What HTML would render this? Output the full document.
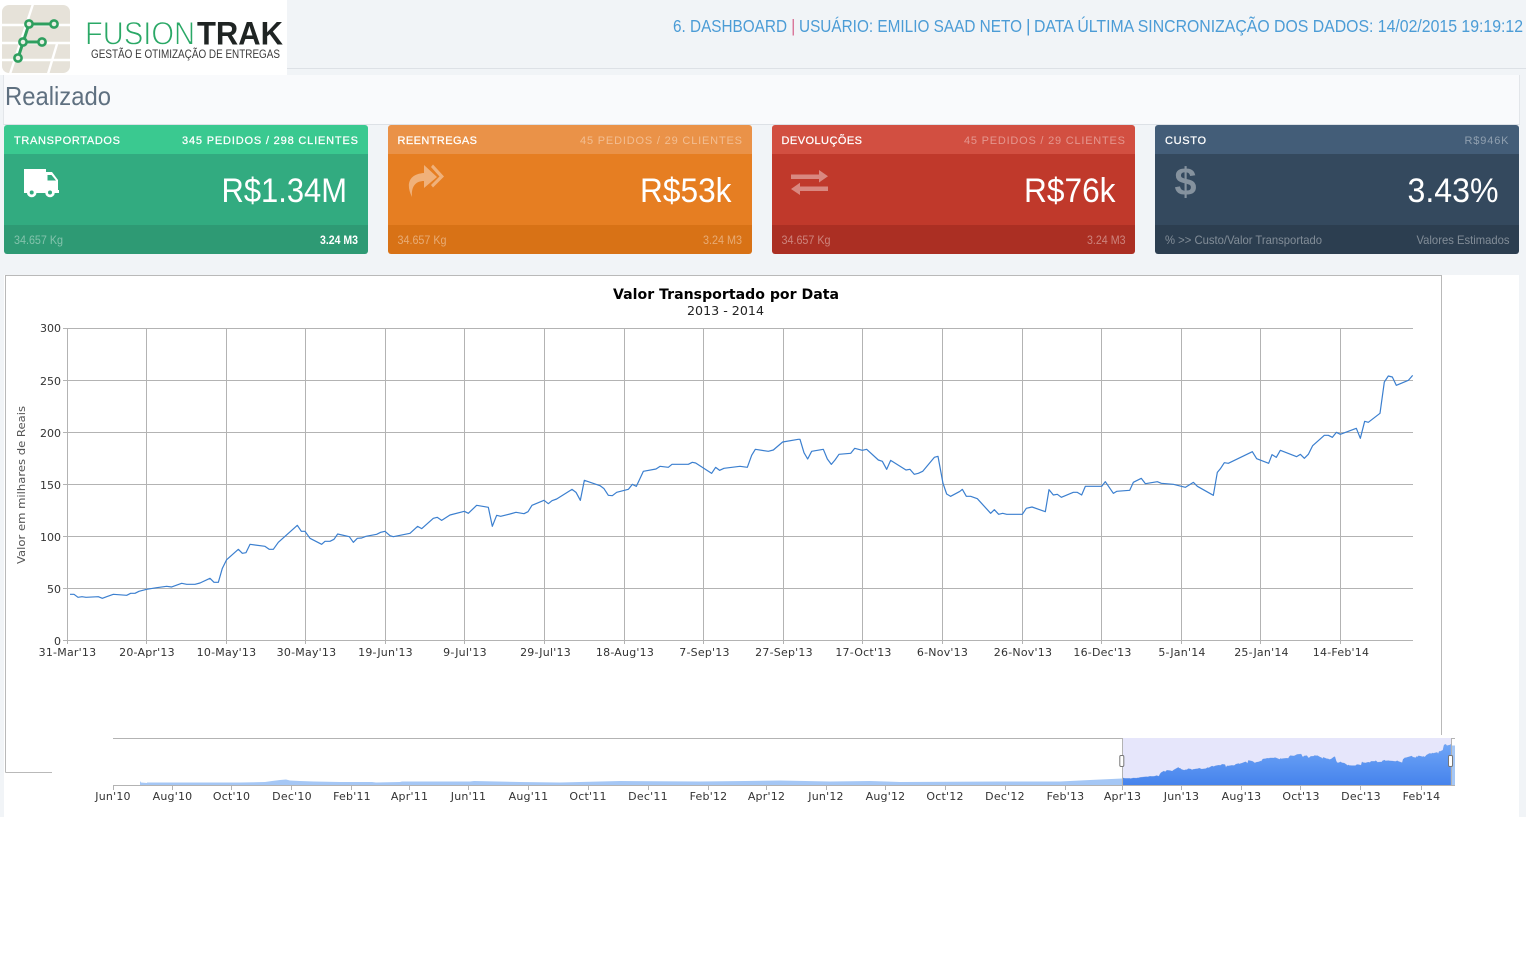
<!DOCTYPE html>
<html lang="pt-BR">
<head>
<meta charset="utf-8">
<title>FusionTrak - Dashboard</title>
<style>
html,body{margin:0;padding:0;width:1526px;height:970px;overflow:hidden;background:#fff}
.abs{position:absolute}
.card{position:absolute;top:125px;height:129px;border-radius:3px;overflow:hidden}
.card i{display:block;position:absolute;left:0;right:0}
.h{top:0;height:29px}.b{top:29px;height:71px}.f{top:100px;height:29px}
svg{position:absolute;left:0;top:0}
text{font-family:"Liberation Sans",sans-serif}
.d text,text.d{font-family:"DejaVu Sans",sans-serif;font-size:11px;fill:#333}
.t text{letter-spacing:.22px}
.w{fill:#fff}
</style>
</head>
<body>
<div class="abs" style="left:0;top:0;width:1526px;height:817px;background:#f1f4f7"></div>
<div class="abs" style="left:0;top:68px;width:1526px;height:1px;background:#dde1e6"></div>
<div class="abs" style="left:0;top:0;width:287px;height:75px;background:#fff"></div>
<div class="abs" style="left:4px;top:75px;width:1515px;height:49px;background:#f9fafc;border-left:1px solid #e3e6ea;border-right:1px solid #e3e6ea;border-bottom:1px solid #dde1e6;box-sizing:content-box;margin-left:-1px"></div>
<div class="abs" style="left:4px;top:275px;width:1515px;height:542px;background:#fff"></div>

<div class="card" style="left:4px;width:364px"><i class="h" style="background:#3ac990"></i><i class="b" style="background:#32ab80"></i><i class="f" style="background:#2e9a74"></i></div>
<div class="card" style="left:388px;width:364px"><i class="h" style="background:#ea9248"></i><i class="b" style="background:#e67e22"></i><i class="f" style="background:#d87216"></i></div>
<div class="card" style="left:772px;width:363px"><i class="h" style="background:#d24f41"></i><i class="b" style="background:#c0392b"></i><i class="f" style="background:#ab2f23"></i></div>
<div class="card" style="left:1155px;width:364px"><i class="h" style="background:#435d78"></i><i class="b" style="background:#34495e"></i><i class="f" style="background:#2c3e50"></i></div>

<svg width="1526" height="970" viewBox="0 0 1526 970" xmlns="http://www.w3.org/2000/svg">
<defs>
<linearGradient id="nav" x1="0" y1="0" x2="0" y2="1"><stop offset="0" stop-color="#6fa5f7"/><stop offset="1" stop-color="#4683ec"/></linearGradient>
<polyline id="l1" transform="translate(60 480) scale(.33333)" points="30,343 42,343 54,352 66,350 78,352 115,350 127,355 140,350 160,343 200,346 212,340 225,340 237,334 260,328 290,323 320,319 335,321 365,310 380,313 405,313 420,309 450,295 462,307 475,307 487,265 500,239 535,208 547,220 558,218 570,193 615,199 628,208 640,208 655,187 712,136 724,154 735,154 750,175 785,193 795,184 810,184 822,178 833,162 868,170 880,187 892,175 905,174 918,169 950,163 962,157 975,154 990,167 1000,170 1050,160 1073,139 1085,146 1120,115 1132,112 1145,121 1170,105 1213,94 1225,100 1250,76 1285,82 1297,139 1310,106 1322,109 1350,102"/>
<polyline id="l2" transform="translate(500 420) scale(.33333)" points="30,282 48,277 72,281 84,275 96,256 132,241 145,251 156,242 170,237 216,208 228,217 241,241 253,181 300,197 312,206 325,226 337,227 350,217 385,208 397,193 409,199 430,154 468,147 480,139 505,142 516,133 565,133 577,127 587,129 635,160 647,142 659,151 672,145 720,139 742,142 755,106 766,88 805,94 820,90 848,66 895,58 900,58 912,98 923,117 935,94 970,88 982,117 994,133 1005,120 1017,103 1052,100 1064,85 1087,91 1100,88 1135,120 1147,124 1160,148 1172,121 1218,150 1230,148 1243,163 1255,160 1268,154 1303,112 1314,109 1329,190 1340,222 1352,229 1380,214"/>
<polyline id="l3" transform="translate(950 360) scale(.33333)" points="30,394 37,388 49,409 62,409 82,416 122,460 133,449 146,463 158,460 170,463 217,463 229,445 246,441 286,455 297,389 310,405 322,403 334,412 370,397 382,397 395,405 406,379 455,379 466,365 490,400 500,394 539,391 550,367 574,355 586,371 622,365 634,370 670,373 706,382 730,367 742,379 790,406 802,337 812,325 823,308 835,310 907,275 920,296 956,310 966,284 979,292 991,271 1040,290 1051,283 1063,295 1075,283 1088,257 1123,226 1135,226 1147,232 1159,217 1171,223 1219,205 1231,235 1244,184 1255,187 1290,160 1303,66 1315,48 1327,51 1339,76 1375,61 1388,46"/>
<clipPath id="navclip">
<polygon transform="translate(1122 785) scale(.24443 .154) translate(-67 -640) translate(60 480) scale(.33333)" points="21,480 21,343 30,343 42,343 54,352 66,350 78,352 115,350 127,355 140,350 160,343 200,346 212,340 225,340 237,334 260,328 290,323 320,319 335,321 365,310 380,313 405,313 420,309 450,295 462,307 475,307 487,265 500,239 535,208 547,220 558,218 570,193 615,199 628,208 640,208 655,187 712,136 724,154 735,154 750,175 785,193 795,184 810,184 822,178 833,162 868,170 880,187 892,175 905,174 918,169 950,163 962,157 975,154 990,167 1000,170 1050,160 1073,139 1085,146 1120,115 1132,112 1145,121 1170,105 1213,94 1225,100 1250,76 1285,82 1297,139 1310,106 1322,109 1350,102 1352,480"/>
<polygon transform="translate(1122 785) scale(.24443 .154) translate(-67 -640) translate(500 420) scale(.33333)" points="30,660 30,282 48,277 72,281 84,275 96,256 132,241 145,251 156,242 170,237 216,208 228,217 241,241 253,181 300,197 312,206 325,226 337,227 350,217 385,208 397,193 409,199 430,154 468,147 480,139 505,142 516,133 565,133 577,127 587,129 635,160 647,142 659,151 672,145 720,139 742,142 755,106 766,88 805,94 820,90 848,66 895,58 900,58 912,98 923,117 935,94 970,88 982,117 994,133 1005,120 1017,103 1052,100 1064,85 1087,91 1100,88 1135,120 1147,124 1160,148 1172,121 1218,150 1230,148 1243,163 1255,160 1268,154 1303,112 1314,109 1329,190 1340,222 1352,229 1380,214 1382,660"/>
<polygon transform="translate(1122 785) scale(.24443 .154) translate(-67 -640) translate(950 360) scale(.33333)" points="30,840 30,394 37,388 49,409 62,409 82,416 122,460 133,449 146,463 158,460 170,463 217,463 229,445 246,441 286,455 297,389 310,405 322,403 334,412 370,397 382,397 395,405 406,379 455,379 466,365 490,400 500,394 539,391 550,367 574,355 586,371 622,365 634,370 670,373 706,382 730,367 742,379 790,406 802,337 812,325 823,308 835,310 907,275 920,296 956,310 966,284 979,292 991,271 1040,290 1051,283 1063,295 1075,283 1088,257 1123,226 1135,226 1147,232 1159,217 1171,223 1219,205 1231,235 1244,184 1255,187 1290,160 1303,66 1315,48 1327,51 1339,76 1375,61 1388,46 1388,840"/>
</clipPath>
</defs>

<!-- logo -->
<rect x="2" y="5" width="68" height="68" rx="7" fill="#e6e2d9"/>
<g stroke="#fff" stroke-width="2.4" fill="none">
<path d="M33 4L10 74M57 44L48 74M2 25H71M2 43H71M2 60H71"/>
</g>
<g stroke="#2e9f5f" stroke-width="3" fill="none">
<path d="M54 24H29L18 58M23 42H42"/>
<g fill="#e9efe4" stroke-width="2.6"><circle cx="54" cy="24" r="3.6"/><circle cx="29" cy="24" r="3.6"/><circle cx="23" cy="42" r="3.6"/><circle cx="42" cy="42" r="3.6"/><circle cx="18" cy="58" r="3.6"/></g>
</g>
<text x="85" y="44.500" font-size="32" fill="#2aa866" stroke="#fff" stroke-width=".9" textLength="110" lengthAdjust="spacingAndGlyphs">FUSION</text>
<text x="197" y="44.500" font-size="32" font-weight="700" fill="#1f2423" textLength="86" lengthAdjust="spacingAndGlyphs">TRAK</text>
<text x="91" y="58" font-size="11.500" fill="#3a3a3a" textLength="189" lengthAdjust="spacingAndGlyphs">GESTÃO E OTIMIZAÇÃO DE ENTREGAS</text>

<!-- header -->
<g font-size="17.500" fill="#4b9cd6">
<text x="673" y="32" textLength="114" lengthAdjust="spacingAndGlyphs">6. DASHBOARD</text>
<text x="791" y="32" fill="#d9779a">|</text>
<text x="799" y="32" textLength="223" lengthAdjust="spacingAndGlyphs">USUÁRIO: EMILIO SAAD NETO</text>
<text x="1026" y="32">|</text>
<text x="1034" y="32" textLength="489" lengthAdjust="spacingAndGlyphs">DATA ÚLTIMA SINCRONIZAÇÃO DOS DADOS: 14/02/2015 19:19:12</text>
</g>
<text x="5" y="105" font-size="26" fill="#5f7080" textLength="106" lengthAdjust="spacingAndGlyphs">Realizado</text>

<!-- card heads -->
<g font-size="11" fill="#fff" font-weight="400">
<text x="14" y="144" stroke="#fff" stroke-width=".25" textLength="106">TRANSPORTADOS</text>
<text x="182" y="144" stroke="#fff" stroke-width=".25" textLength="176">345 PEDIDOS / 298 CLIENTES</text>
<text x="397.500" y="144" stroke="#fff" stroke-width=".25" textLength="79.500">REENTREGAS</text>
<text x="580" y="144" opacity=".4" textLength="162">45 PEDIDOS / 29 CLIENTES</text>
<text x="781.500" y="144" stroke="#fff" stroke-width=".25" textLength="80.500">DEVOLUÇÕES</text>
<text x="964" y="144" opacity=".4" textLength="161">45 PEDIDOS / 29 CLIENTES</text>
<text x="1165" y="144" stroke="#fff" stroke-width=".25" textLength="41">CUSTO</text>
<text x="1464.500" y="144" opacity=".4" textLength="44">R$946K</text>
</g>

<!-- card values -->
<g font-size="34" fill="#fff">
<text x="221.500" y="202" textLength="125.500" lengthAdjust="spacingAndGlyphs">R$1.34M</text>
<text x="640" y="202" textLength="91.500" lengthAdjust="spacingAndGlyphs">R$53k</text>
<text x="1024" y="202" textLength="91.500" lengthAdjust="spacingAndGlyphs">R$76k</text>
<text x="1407.500" y="202" textLength="91" lengthAdjust="spacingAndGlyphs">3.43%</text>
</g>

<!-- card footers -->
<g font-size="12" fill="#fff">
<text x="14" y="244" opacity=".4" textLength="49" lengthAdjust="spacingAndGlyphs">34.657 Kg</text>
<text x="320" y="244" font-weight="700" textLength="38" lengthAdjust="spacingAndGlyphs">3.24 M3</text>
<text x="397.500" y="244" opacity=".4" textLength="49" lengthAdjust="spacingAndGlyphs">34.657 Kg</text>
<text x="703" y="244" opacity=".4" textLength="39" lengthAdjust="spacingAndGlyphs">3.24 M3</text>
<text x="781.500" y="244" opacity=".4" textLength="49" lengthAdjust="spacingAndGlyphs">34.657 Kg</text>
<text x="1087" y="244" opacity=".4" textLength="38.500" lengthAdjust="spacingAndGlyphs">3.24 M3</text>
<text x="1165" y="244" opacity=".4" textLength="157" lengthAdjust="spacingAndGlyphs">% &gt;&gt; Custo/Valor Transportado</text>
<text x="1416.500" y="244" opacity=".4" textLength="93" lengthAdjust="spacingAndGlyphs">Valores Estimados</text>
</g>

<!-- icons -->
<g>
<path d="M24 169H46V193H24Z" fill="#fff"/>
<path d="M46 172H52L58 180V190H59V193H46Z" fill="#fff"/>
<path d="M47.500 175H51.500L56 180.500H47.500Z" fill="#32ab80"/>
<circle cx="31.700" cy="192.500" r="4.800" fill="#fff"/><circle cx="31.700" cy="192.500" r="2" fill="#32ab80"/>
<circle cx="50" cy="192.500" r="4.800" fill="#fff"/><circle cx="50" cy="192.500" r="2" fill="#32ab80"/>
</g>
<g fill="#fff" opacity=".4">
<path d="M412 197C405 183 410 174 424 173V165L437 177L424 188V181C416 181 411 186 412 197Z"/>
<path d="M431 167L433 164.500L444 176.500L433 187.500L431 185L439.500 176.500Z"/>
</g>
<g fill="#fff" opacity=".4">
<path d="M791 174.500H819V170L828 176.300L819 182.500V179H791Z"/>
<path d="M828 186.500H800V182.700L791 189L800 195V191H828Z"/>
</g>
<text x="1174.500" y="195" font-size="39" font-weight="700" fill="#fff" opacity=".4" textLength="22" lengthAdjust="spacingAndGlyphs">$</text>

<!-- chart frame -->
<path d="M5.500 772.500V275.500H1441.500V735M5.500 772.500H52" fill="none" stroke="#b9b9b9" stroke-width="1"/>

<!-- chart titles -->
<text class="d" x="726" y="299" text-anchor="middle" style="font-size:14px;font-weight:700;fill:#000" textLength="226" lengthAdjust="spacingAndGlyphs">Valor Transportado por Data</text>
<text class="d" x="725.500" y="315" text-anchor="middle" style="font-size:12.500px;fill:#222" textLength="77" lengthAdjust="spacingAndGlyphs">2013 - 2014</text>

<!-- grid -->
<g stroke="#b3b3b3" stroke-width="1" fill="none" shape-rendering="crispEdges">
<path d="M63 328.500H1413M63 380.500H1413M63 432.500H1413M63 484.500H1413M63 536.500H1413M63 588.500H1413M63 640.500H1413"/>
<path d="M67.500 328V644M146.500 328V644M226.500 328V644M305.500 328V644M385.500 328V644M464.500 328V644M544.500 328V644M624.500 328V644M703.500 328V644M783.500 328V644M862.500 328V644M942.500 328V644M1022.500 328V644M1101.500 328V644M1181.500 328V644M1260.500 328V644M1340.500 328V644"/>
</g>

<!-- y labels -->
<g class="d" text-anchor="end">
<text x="61" y="332">300</text><text x="61" y="385">250</text><text x="61" y="437">200</text><text x="61" y="489">150</text><text x="61" y="541">100</text><text x="61" y="593">50</text><text x="61" y="645">0</text>
</g>
<text class="d" transform="translate(25 485) rotate(-90)" text-anchor="middle" style="fill:#555" textLength="158" lengthAdjust="spacingAndGlyphs">Valor em milhares de Reais</text>

<!-- x labels -->
<g class="d t" text-anchor="middle">
<text x="67.500" y="656">31-Mar'13</text><text x="147" y="656">20-Apr'13</text><text x="226.500" y="656">10-May'13</text><text x="306.500" y="656">30-May'13</text><text x="385.500" y="656">19-Jun'13</text><text x="465" y="656">9-Jul'13</text><text x="545.500" y="656">29-Jul'13</text><text x="625" y="656">18-Aug'13</text><text x="704.500" y="656">7-Sep'13</text><text x="784" y="656">27-Sep'13</text><text x="863.500" y="656">17-Oct'13</text><text x="942.500" y="656">6-Nov'13</text><text x="1023" y="656">26-Nov'13</text><text x="1102.500" y="656">16-Dec'13</text><text x="1182" y="656">5-Jan'14</text><text x="1261.500" y="656">25-Jan'14</text><text x="1341" y="656">14-Feb'14</text>
</g>

<!-- data line -->
<g fill="none" stroke="#3b7fcf" stroke-width="3.600" stroke-linejoin="round">
<use href="#l1"/><use href="#l2"/><use href="#l3"/>
</g>

<!-- navigator -->
<rect x="1122" y="738" width="329" height="47" fill="#e6e6fb"/>
<path d="M140 785V781L141 782.500L147 783V782.500L240 782.500L265 782L272 781L280 780L286 779.500L290 780.500L300 781L314 781.500L340 782L372 782L376 782.500L400 782L402 781.500L470 781.500L474 781L520 782L560 782.500L620 781L700 781.500L745 781L780 780.500L830 781.500L870 781L900 782L1000 781.500L1060 781.500L1090 780L1122 778.500V785Z" fill="#a5c7f5"/>
<rect x="1122" y="744" width="330" height="41" fill="url(#nav)" clip-path="url(#navclip)"/>
<g transform="translate(1122 785) scale(.24443 .154) translate(-67 -640)" fill="none" stroke="#4f86da" stroke-width="3.500" stroke-linejoin="round">
<use href="#l1"/><use href="#l2"/><use href="#l3"/>
</g>
<rect x="1451.500" y="745.500" width="3.500" height="39.500" fill="#a5c7f5"/>
<g stroke="#b3b3b3" stroke-width="1" fill="none" shape-rendering="crispEdges">
<path d="M113 738.500H1122.500V785M1451.500 738.500H1455M1451.500 738V785"/>
<path d="M113 785.500H1455"/>
<path d="M113.500 785V790M172.500 785V790M231.500 785V790M291.500 785V790M351.500 785V790M409.500 785V790M468.500 785V790M528.500 785V790M588.500 785V790M648.500 785V790M708.500 785V790M766.500 785V790M826.500 785V790M885.500 785V790M945.500 785V790M1005.500 785V790M1065.500 785V790M1122.500 785V790M1181.500 785V790M1241.500 785V790M1300.500 785V790M1360.500 785V790M1421.500 785V790"/>
</g>
<rect x="1119.800" y="755.500" width="4" height="11" rx="1.200" fill="#fff" stroke="#777" stroke-width="1"/>
<rect x="1448.500" y="755.500" width="4" height="11" rx="1.200" fill="#fff" stroke="#777" stroke-width="1"/>
<g class="d t" text-anchor="middle">
<text x="113" y="800">Jun'10</text><text x="172.500" y="800">Aug'10</text><text x="231.500" y="800">Oct'10</text><text x="292" y="800">Dec'10</text><text x="352" y="800">Feb'11</text><text x="409.500" y="800">Apr'11</text><text x="468.500" y="800">Jun'11</text><text x="528.500" y="800">Aug'11</text><text x="588" y="800">Oct'11</text><text x="648" y="800">Dec'11</text><text x="708.500" y="800">Feb'12</text><text x="766.500" y="800">Apr'12</text><text x="826" y="800">Jun'12</text><text x="885.500" y="800">Aug'12</text><text x="945" y="800">Oct'12</text><text x="1005" y="800">Dec'12</text><text x="1065.500" y="800">Feb'13</text><text x="1122.500" y="800">Apr'13</text><text x="1181.500" y="800">Jun'13</text><text x="1241.500" y="800">Aug'13</text><text x="1301" y="800">Oct'13</text><text x="1361" y="800">Dec'13</text><text x="1421.500" y="800">Feb'14</text>
</g>
</svg>
</body>
</html>
